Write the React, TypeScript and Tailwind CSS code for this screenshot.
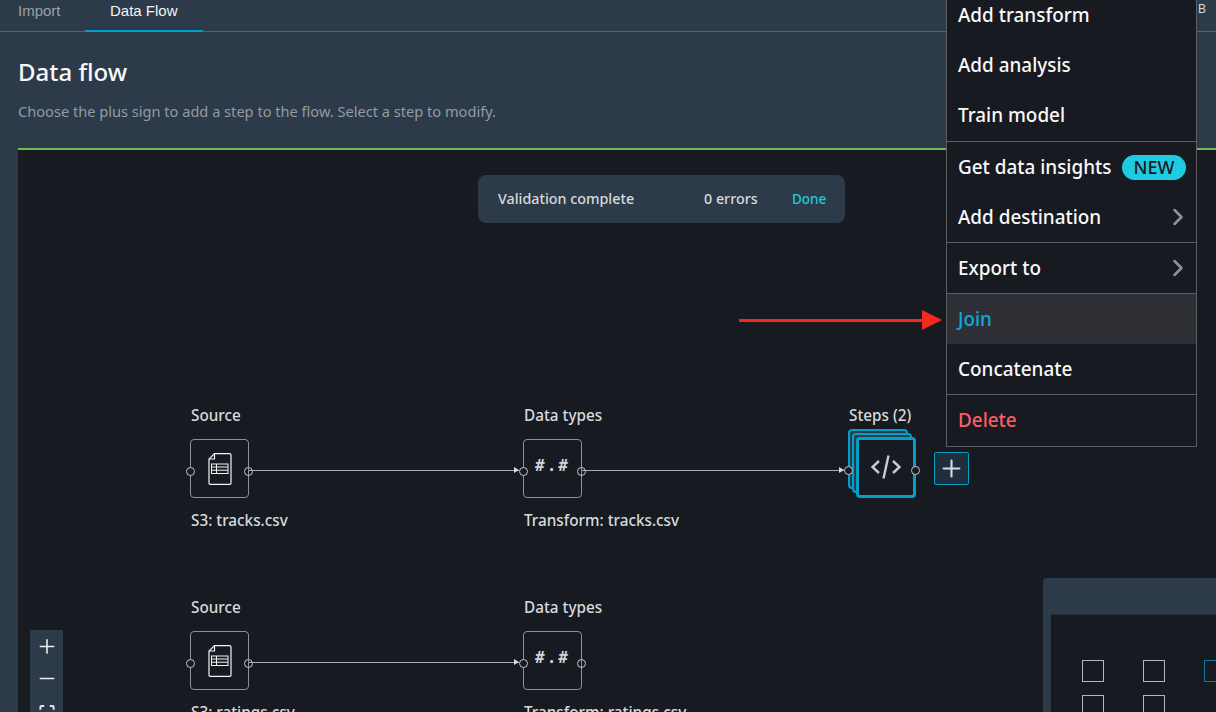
import { ChevronRight, Minus, Plus } from 'lucide-react';

const FONT = "font-['Noto_Sans',sans-serif]";

function FileIcon() {
  return (
    <svg width="24" height="32" viewBox="0 0 24 32" fill="none" stroke="#f2f3f3" strokeWidth="1.2">
      <path d="M6.5 0.6H21.5a1.5 1.5 0 0 1 1.5 1.5V29.9a1.5 1.5 0 0 1-1.5 1.5H2.5A1.5 1.5 0 0 1 1 29.9V6z" />
      <path d="M6.5 0.6V6H1" />
      <rect x="3.5" y="11" width="16.5" height="9.5" strokeWidth="1" />
      <path d="M3.5 14h16.5M3.5 17.2h16.5M8.5 11v9.5" strokeWidth="1" />
    </svg>
  );
}

function Port({ className }: { className: string }) {
  return <span className={`absolute h-[9px] w-[9px] rounded-full border border-[#c2c6c9] ${className}`} />;
}

function Arrowhead() {
  return <span className="absolute right-0 top-[-3px] h-0 w-0 border-y-[3.5px] border-l-[5px] border-y-transparent border-l-[#d5dbdb]" />;
}

function Node({ title, caption, className, children }: { title: string; caption: string; className: string; children: React.ReactNode }) {
  return (
    <div className={`absolute w-[240px] ${className}`}>
      <div className="h-[20px] pl-[1px] text-[15.3px] leading-[20px] font-medium text-[#d5dbdb]">{title}</div>
      <div className="relative mt-[14px] flex h-[59px] w-[59px] items-center justify-center rounded-[4px] border border-[#8d9196]">
        {children}
        <Port className="left-[-5px] top-[27px] bg-[#171a21]" />
        <Port className="right-[-5px] top-[27px]" />
      </div>
      <div className="mt-[12px] h-[20px] pl-[1px] text-[15.3px] leading-[20px] font-medium text-[#d5dbdb]">{caption}</div>
    </div>
  );
}

function TypeGlyph() {
  return <span className="mb-[6px] font-['DejaVu_Sans_Mono',monospace] text-[16px] font-bold tracking-[2px] text-[#d0d3d6]">#.#</span>;
}

function MenuRow({ label, color = 'text-[#f9f9f9]', active, arrow, badge, tall }: { label: string; color?: string; active?: boolean; arrow?: boolean; badge?: boolean; tall?: boolean }) {
  return (
    <div className={`flex items-center justify-between pl-[11px] text-[18.9px] font-medium ${tall ? 'h-[51px] pb-px' : 'h-[50px]'} ${arrow ? 'pr-[4px]' : 'pr-[10px]'} ${active ? 'bg-[#2f3036]' : ''} ${color}`}>
      <span>{label}</span>
      {arrow && <ChevronRight className="h-[28px] w-[28px] text-[#8d9196]" strokeWidth={2.2} />}
      {badge && (
        <span className="flex h-[25px] w-[64px] items-center justify-center rounded-full bg-[#1fcbe0] text-[18px] text-[#16191f]">NEW</span>
      )}
    </div>
  );
}

function Divider() {
  return <div className="h-px bg-[#5b5e62]" />;
}

function MapBox({ teal }: { teal?: boolean }) {
  return <div className={`h-[22px] w-[22px] border ${teal ? 'border-[#0b7d99]' : 'border-[#b4b7ba]'}`} />;
}

export default function App() {
  return (
    <div className={`relative flex h-[712px] w-[1216px] flex-col overflow-hidden bg-[#2d3a4a] ${FONT}`}>
      <div className="flex h-[32px] shrink-0 border-b border-[#5c6269] font-['Liberation_Sans',sans-serif] text-[15px]">
        <div className="w-[85px] pl-[18px] text-[#98a2aa]">Import</div>
        <div className="relative h-[32px] w-[118px] pl-[25px] text-[#f2f3f3]">
          Data Flow
          <span className="absolute inset-x-0 bottom-0 h-[2px] bg-[#00a1c9]" />
        </div>
        <div className="flex-1 pr-[10px] text-right text-[12px] text-[#d5dbdb]">B</div>
      </div>

      <div className="flex shrink-0 flex-col pl-[18px]">
        <h1 className="mt-[23px] h-[34px] text-[24px] leading-[34px] font-medium text-[#f9f9f9]">Data flow</h1>
        <p className="mt-[12px] mb-[1px] h-[20px] text-[14.6px] leading-[20px] text-[#939ba3]">Choose the plus sign to add a step to the flow. Select a step to modify.</p>
      </div>

      <div className="relative ml-[18px] mt-[26px] flex-1 border-t-2 border-[#6ac04a] bg-[#171a21]">
        <div className="absolute left-[460px] top-[25px] flex h-[48px] w-[367px] items-center rounded-lg bg-[#2d3a4a] pl-[20px] text-[14.3px] font-medium text-[#d5dbdb]">
          <span className="w-[206px]">Validation complete</span>
          <span className="w-[88px]">0 errors</span>
          <span className="text-[13.5px] text-[#22c8de]">Done</span>
        </div>

        <div className="absolute left-[231px] top-[320px] h-px w-[270px] bg-[#a8acaf]"><Arrowhead /></div>
        <div className="absolute left-[564px] top-[320px] h-px w-[262px] bg-[#a8acaf]"><Arrowhead /></div>
        <div className="absolute left-[231px] top-[512px] h-px w-[270px] bg-[#a8acaf]"><Arrowhead /></div>

        <Node title="Source" caption="S3: tracks.csv" className="left-[172px] top-[255px]">
          <FileIcon />
        </Node>
        <Node title="Data types" caption="Transform: tracks.csv" className="left-[505px] top-[255px]">
          <TypeGlyph />
        </Node>
        <Node title="Source" caption="S3: ratings.csv" className="left-[172px] top-[447px]">
          <FileIcon />
        </Node>
        <Node title="Data types" caption="Transform: ratings.csv" className="left-[505px] top-[447px]">
          <TypeGlyph />
        </Node>

        <div className="absolute left-[831px] top-[255px] h-[20px] text-[15.3px] leading-[20px] font-medium text-[#d5dbdb]">Steps (2)</div>
        <div className="absolute left-[830px] top-[279px] h-[60px] w-[60px] rounded-[4px] border-2 border-[#00a1c9] bg-[#2d3a4a]" />
        <div className="absolute left-[834px] top-[283px] h-[60px] w-[60px] rounded-[4px] border-2 border-[#00a1c9] bg-[#2d3a4a]" />
        <div className="absolute left-[838px] top-[287px] flex h-[61px] w-[60px] items-center justify-center rounded-[4px] border-[3px] border-[#00a1c9] bg-[#171a21]">
          <svg className="mb-[1px]" width="32" height="26" viewBox="0 0 32 26" fill="none" stroke="#c8ccd0" strokeWidth="2.4">
            <path d="M9 7 2.5 13 9 19M23 7l6.5 6L23 19M18.5 1.5 13.5 24.5" />
          </svg>
          <Port className="left-[-15px] top-[26px] bg-[#171a21]" />
          <Port className="right-[-7px] top-[26px] bg-[#171a21]" />
        </div>
        <button className="absolute left-[916px] top-[302px] flex h-[33px] w-[35px] items-center justify-center rounded-[2px] border border-[#00a1c9] bg-[#1f2e3d] text-[#d5dbdb]">
          <Plus className="h-[27px] w-[27px]" strokeWidth={1.9} />
        </button>

        <div className="absolute left-[12px] top-[480px] flex h-[90px] w-[33px] flex-col items-center bg-[#2d3a4a] text-[#eaeded]">
          <Plus className="mt-[5px] h-[24px] w-[24px]" strokeWidth={1.7} />
          <Minus className="mt-[9px] h-[24px] w-[24px]" strokeWidth={1.7} />
          <svg className="mt-[15px]" width="16" height="16" viewBox="0 0 16 16" fill="none" stroke="#eaeded" strokeWidth="2">
            <path d="M1 5V2.5A1.5 1.5 0 0 1 2.5 1H5M11 1h2.5A1.5 1.5 0 0 1 15 2.5V5M15 11v2.5a1.5 1.5 0 0 1-1.5 1.5H11M5 15H2.5A1.5 1.5 0 0 1 1 13.5V11" />
          </svg>
        </div>

        <div className="absolute left-[1025px] top-[428px] h-[140px] w-[180px] rounded-tl-[4px] bg-[#2d3a4a] pl-[8px] pt-[36px]">
          <div className="grid h-[104px] grid-cols-[22px_22px_22px] content-start gap-x-[39px] gap-y-[13px] border-t border-[#232c38] bg-[#171a21] pl-[31px] pt-[45px]">
            <MapBox />
            <MapBox />
            <MapBox teal />
            <MapBox />
            <MapBox />
          </div>
        </div>
      </div>

      <div className="absolute left-[946px] top-[-10px] w-[251px] border-x border-b border-[#5b5e62] bg-[#171a21]">
        <MenuRow label="Add transform" />
        <MenuRow label="Add analysis" />
        <MenuRow label="Train model" />
        <div className="h-px" />
        <Divider />
        <MenuRow label="Get data insights" badge />
        <MenuRow label="Add destination" arrow />
        <Divider />
        <MenuRow label="Export to" arrow />
        <Divider />
        <MenuRow label="Join" color="text-[#0ca9dc]" active />
        <MenuRow label="Concatenate" />
        <Divider />
        <MenuRow label="Delete" color="text-[#ff5d64]" tall />
      </div>

      <svg className="absolute left-[738px] top-[309px]" width="206" height="22" viewBox="0 0 206 22" fill="#f5281e">
        <rect x="1" y="10" width="185" height="3" />
        <path d="M184 1 204 11 184 21z" />
      </svg>
    </div>
  );
}
